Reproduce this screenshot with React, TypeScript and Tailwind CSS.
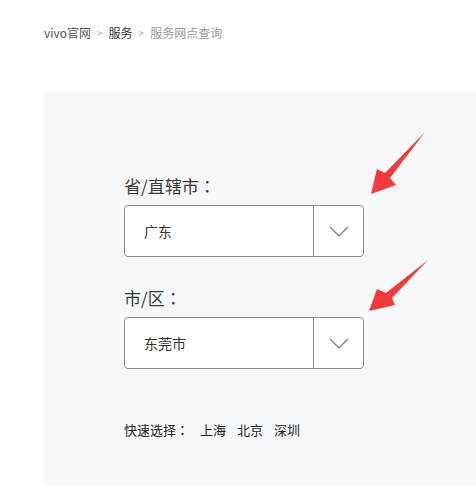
import React from "react";

const font = { fontFamily: '"Noto Sans CJK SC", "Noto Sans", sans-serif' };
const jp = { fontFamily: '"Noto Sans CJK JP", sans-serif' };

function Chevron() {
  return (
    <svg width="20" height="11" viewBox="0 0 20 11" fill="none">
      <path d="M1 1 L10 10 L19 1" stroke="#777" strokeWidth="1.2" />
    </svg>
  );
}

function SelectBox({ value }: { value: string }) {
  return (
    <div className="flex h-[52px] w-[240px] rounded-[4px] border border-[#8a8a8a] bg-white">
      <div className="flex flex-1 items-center pl-[19px] text-[14px] text-[#333]">{value}</div>
      <div className="flex w-[50px] items-center justify-center border-l border-[#8a8a8a]">
        <Chevron />
      </div>
    </div>
  );
}

export default function App() {
  return (
    <div className="relative h-[486px] w-[476px] overflow-hidden bg-white" style={font}>
      <div className="mt-[26px] flex h-[14px] items-center gap-[6px] pl-[44px] text-[12px] leading-[14px]">
        <span className="text-[#555]">vivo官网</span>
        <span className="text-[10px] text-[#aaa]">&gt;</span>
        <span className="text-[#333]">服务</span>
        <span className="text-[10px] text-[#aaa]">&gt;</span>
        <span className="text-[#999]">服务网点查询</span>
      </div>
      <div className="ml-[44px] mt-[52px] h-[394px] bg-[#f7f8fa] pl-[80px] pt-[82px]">
        <div className="h-[24px] text-[17px] leading-[24px] text-[#3a3a3a]">
          省/直辖市<span style={jp}>：</span>
        </div>
        <div className="mt-[7px]">
          <SelectBox value="广东" />
        </div>
        <div className="mt-[29px] h-[24px] text-[17px] leading-[24px] text-[#3a3a3a]">
          市/区<span style={jp}>：</span>
        </div>
        <div className="mt-[7px]">
          <SelectBox value="东莞市" />
        </div>
        <div className="mt-[51px] flex h-[20px] items-center text-[13px] leading-[20px] text-[#222]">
          <span>
            快速选择<span style={jp}>：</span>
          </span>
          <span className="ml-[11px]">上海</span>
          <span className="ml-[11px]">北京</span>
          <span className="ml-[11px]">深圳</span>
        </div>
      </div>
      <svg className="pointer-events-none absolute left-0 top-0" width="476" height="486" viewBox="0 0 476 486">
        <polygon points="425,132 390,178 396,185 371,194 377,169 385,173" fill="#f33a3a" />
        <polygon points="428,260 392,298 395,305 369,311 377,289 386,293" fill="#f33a3a" />
      </svg>
    </div>
  );
}
